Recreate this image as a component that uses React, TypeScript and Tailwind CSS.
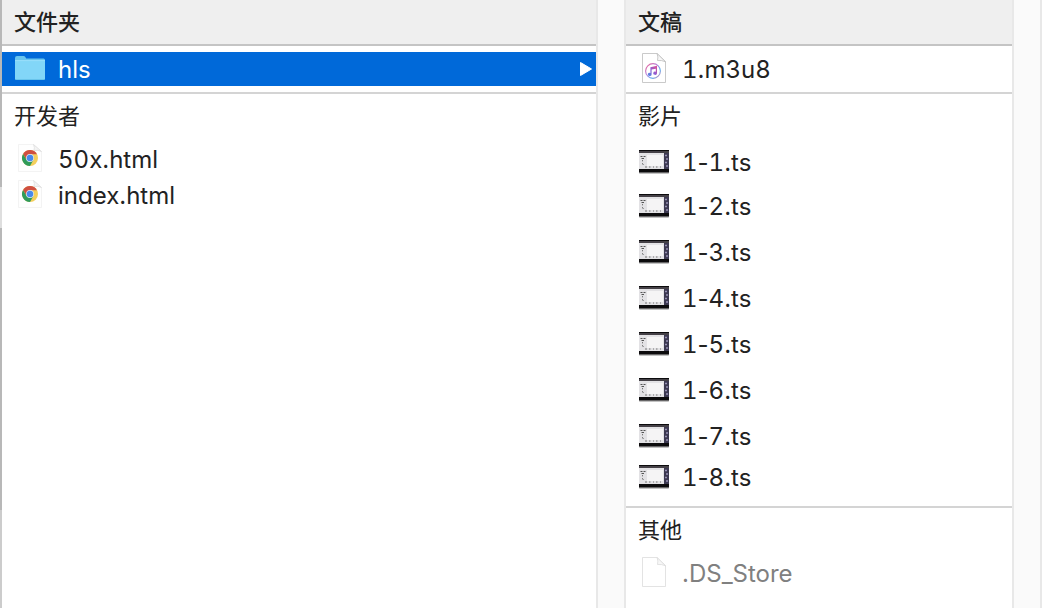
import React from 'react';
import clsx from 'clsx';

type Kind = 'folder' | 'chrome' | 'music' | 'video' | 'blank';

interface Entry {
    name: string;
    kind: Kind;
    selected?: boolean;
    dimmed?: boolean;
}

const developerFiles: Entry[] = [
    { name: '50x.html', kind: 'chrome' },
    { name: 'index.html', kind: 'chrome' },
];

const movieFiles: Entry[] = [1, 2, 3, 4, 5, 6, 7, 8].map((n) => ({ name: `1-${n}.ts`, kind: 'video' }));

const FolderIcon = () => (
    <svg viewBox="0 0 30 24" className="h-6 w-[30px]" aria-hidden="true">
        <path d="M0 2Q0 0 2 0H8.5Q9.7 0 10.3 1L11.2 2.4H28.5Q30 2.4 30 4V8H0Z" fill="#68c5ee" />
        <path d="M0 4.6H30V22.4Q30 24 28.4 24H1.6Q0 24 0 22.4Z" fill="#82d6f8" />
        <path d="M0 4.6H30" stroke="#a3e2fb" strokeWidth="0.8" />
        <path d="M0.5 23.5H29.5" stroke="#62bfe9" strokeWidth="0.8" />
    </svg>
);

/** Sheet of paper with a folded corner, shared by the document icons */
const Page: React.FC<{ stroke: string; children?: React.ReactNode }> = ({ stroke, children }) => (
    <svg viewBox="0 0 24 30" className="h-[30px] w-6" aria-hidden="true">
        <path d="M0.5 0.5H15L23.5 8.5V29.5H0.5Z" fill="#fff" stroke={stroke} strokeWidth="0.8" />
        <path d="M15 0.5Q16.5 4 15.5 7.5Q19.5 7 23.5 8.8Z" fill="#f7f7f7" stroke={stroke} strokeWidth="0.8" />
        {children}
    </svg>
);

const ChromeIcon = () => (
    <svg viewBox="0 0 24 28" className="h-7 w-6" aria-hidden="true">
        <path d="M0.5 0.5H15.5L23.5 7.5V27.5H0.5Z" fill="#fefefe" stroke="#f0f0f0" strokeWidth="0.8" />
        <path d="M15.5 0.5Q17 3.5 16 6.5Q20 5.5 23.5 7.5Z" fill="#f4f4f4" stroke="#dedede" strokeWidth="0.8" />
        <circle cx="12" cy="14" r="8" fill="#f3cf5c" />
        <path d="M12 10.2H18.95A8 8 0 0 0 5.07 10L8.6 15.8Z" fill="#cf4f41" />
        <path d="M5.07 10A8 8 0 0 0 12 22L15.4 15.9L12 17.8L8.6 15.9Z" fill="#2f9b5a" />
        <circle cx="12" cy="14" r="3.9" fill="#dfe8f3" />
        <circle cx="12" cy="14" r="3.2" fill="#4789ec" />
    </svg>
);

const MusicIcon = () => (
    <Page stroke="#bdbdbd">
        <defs>
            <linearGradient id="ring" x1="0" y1="0" x2="1" y2="1">
                <stop offset="0" stopColor="#f06292" />
                <stop offset="0.45" stopColor="#b084df" />
                <stop offset="0.7" stopColor="#5aaef0" />
                <stop offset="1" stopColor="#e879a8" />
            </linearGradient>
            <linearGradient id="note" x1="0" y1="1" x2="1" y2="0">
                <stop offset="0" stopColor="#4b8de8" />
                <stop offset="0.5" stopColor="#8f5bd2" />
                <stop offset="1" stopColor="#e4508f" />
            </linearGradient>
        </defs>
        <circle cx="11" cy="18" r="7.4" fill="#fff" stroke="url(#ring)" strokeWidth="1.1" />
        <path d="M8.4 14.2L15 12.8V20.3A1.9 1.6 0 1 1 13.8 18.8V15.7L9.6 16.6V21.4A1.9 1.6 0 1 1 8.4 19.9Z" fill="url(#note)" />
    </Page>
);

const VideoIcon = () => (
    <svg viewBox="0 0 30 26" className="h-[26px] w-[30px]" aria-hidden="true">
        <rect y="3" width="30" height="23" rx="1" fill="#999" opacity="0.6" />
        <rect y="2" width="30" height="22.5" fill="#0c0b0d" />
        <rect y="3" width="30" height="2" fill="#454147" />
        <rect y="5" width="25" height="16" fill="#e3e2e5" />
        <rect x="8" y="7" width="16" height="11" fill="#f5f4f5" />
        <rect x="25" y="5" width="5" height="16" fill="#3c3951" />
        <path d="M26 7.5H28M27 11H29M26 14.5H28M27 18H29" stroke="#9690b4" strokeWidth="1.3" />
        <path d="M1.5 8.5H3.5M4.5 8.5H6.5M2.5 10.5H5M3 13L4 12.5M3 15.5L4.5 16.5" stroke="#555" strokeWidth="1" />
        <path d="M6 19H8M10 19H11.5M14 19H15M17 19H18.5M21 19H22" stroke="#777" strokeWidth="1" />
    </svg>
);

const Icon: React.FC<{ kind: Kind }> = ({ kind }) => {
    switch (kind) {
        case 'folder':
            return <FolderIcon />;
        case 'chrome':
            return <ChromeIcon />;
        case 'music':
            return <MusicIcon />;
        case 'video':
            return <VideoIcon />;
        default:
            return <Page stroke="#dcdcdc" />;
    }
};

/** Digits share one width, punctuation keeps its own */
const FileName: React.FC<{ name: string }> = ({ name }) => (
    <span className="grow pt-0.5">
        {name.split(/(\d+)/).map((part, i) =>
            i % 2 ? <span key={i} className="tabular-nums">{part}</span> : part,
        )}
    </span>
);

const Row: React.FC<{ entry: Entry; className: string }> = ({ entry, className }) => (
    <li>
        <button
            type="button"
            className={clsx(
                'flex w-full items-center pl-3 pr-1 text-left text-2xl',
                entry.selected && 'bg-[#0069d9] text-white',
                entry.dimmed && 'text-[#808080]',
                className,
            )}
        >
            <span className="mr-3 flex w-8 shrink-0 justify-center pb-0.5">
                <Icon kind={entry.kind} />
            </span>
            <FileName name={entry.name} />
            {entry.selected && (
                <svg viewBox="0 0 12 14" className="h-3.5 w-3" aria-hidden="true">
                    <path d="M0.5 0.5L11.5 7L0.5 13.5Z" fill="#fff" stroke="#fff" strokeLinejoin="round" />
                </svg>
            )}
        </button>
    </li>
);

const ColumnHeader: React.FC<{ title: string }> = ({ title }) => (
    <h2 className="flex h-[46px] items-center border-b-2 border-[#c4c4c4] bg-[#efefef] pl-3 text-[22px] font-medium">
        {title}
    </h2>
);

const SectionTitle: React.FC<{ title: string }> = ({ title }) => (
    <h3 className="mb-[3px] flex h-11 items-center pl-3 text-[22px]">{title}</h3>
);

const Gutter = () => <div className="w-[30px] shrink-0 border-x-2 border-[#e8e8e8] bg-[#fafafa]" />;

export default function App() {
    return (
        <main className="flex min-h-screen bg-white font-[Inter,'Noto_Sans_CJK_SC',sans-serif] text-[#222]">
            {/* Edge of the window behind */}
            <div className="w-0.5 shrink-0 bg-[linear-gradient(#b8b8b8_187px,#dedede_187px_228px,#b8b8b8_228px_510px,#cccccc_510px)]" />

            {/* Root folder */}
            <section className="min-w-0 grow-[594] basis-0">
                <ColumnHeader title="文件夹" />
                <ul className="border-b-2 border-[#d4d4d4] py-1.5">
                    <Row entry={{ name: 'hls', kind: 'folder', selected: true }} className="h-[34px]" />
                </ul>
                <SectionTitle title="开发者" />
                <ul>
                    {developerFiles.map((f) => (
                        <Row key={f.name} entry={f} className="h-9" />
                    ))}
                </ul>
            </section>

            <Gutter />

            {/* Contents of hls */}
            <section className="min-w-0 grow-[386] basis-0">
                <ColumnHeader title="文稿" />
                <ul className="border-b-2 border-[#d4d4d4] py-1.5">
                    <Row entry={{ name: '1.m3u8', kind: 'music' }} className="h-[34px]" />
                </ul>
                <SectionTitle title="影片" />
                <ul className="border-b-2 border-[#d4d4d4] pb-[11px]">
                    {movieFiles.map((f, i) => (
                        <Row
                            key={f.name}
                            entry={f}
                            className={i === 0 ? 'h-[42px]' : i === movieFiles.length - 1 ? 'h-9' : 'h-[46px]'}
                        />
                    ))}
                </ul>
                <SectionTitle title="其他" />
                <ul>
                    <Row entry={{ name: '.DS_Store', kind: 'blank', dimmed: true }} className="h-9" />
                </ul>
            </section>

            <Gutter />
        </main>
    );
}
